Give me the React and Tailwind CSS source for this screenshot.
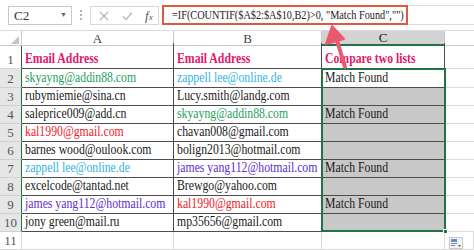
const COLS = 'grid grid-cols-[22px_152px_148px_123px_1fr]'

const C = {
  pink: 'text-[#e5176c]',
  green: 'text-[#26a060]',
  cyan: 'text-[#33b2e4]',
  red: 'text-[#ee2329]',
  purple: 'text-[#5a2fcf]',
  black: 'text-[#1a1a1a]',
}

const rows = [
  [['skyayng@addin88.com', 'green'], ['zappell lee@online.de', 'cyan'], 'Match Found'],
  [['rubymiemie@sina.cn', 'black'], ['Lucy.smith@landg.com', 'black'], ''],
  [['saleprice009@add.cn', 'black'], ['skyayng@addin88.com', 'green'], 'Match Found'],
  [['kal1990@gmail.com', 'red'], ['chavan008@gmail.com', 'black'], ''],
  [['barnes wood@oulook.com', 'black'], ['bolign2013@hotmail.com', 'black'], ''],
  [['zappell lee@online.de', 'cyan'], ['james yang112@hotmail.com', 'purple'], 'Match Found'],
  [['excelcode@tantad.net', 'black'], ['Brewgo@yahoo.com', 'black'], ''],
  [['james yang112@hotmail.com', 'purple'], ['kal1990@gmail.com', 'red'], 'Match Found'],
  [['jony green@mail.ru', 'black'], ['mp35656@gmail.com', 'black'], ''],
]

function Toolbar() {
  return (
    <div className="flex h-[31px] items-start border-b border-[#dcdcdc] bg-white pt-[5px]">
      <div className="ml-[8px] mt-[1px] flex h-[19px] w-[64px] items-center justify-between border border-[#c9c9c9] pl-[5px] pr-[4px]">
        <span className="text-[13px] text-[#333]">C2</span>
        <span className="text-[7px] text-[#666]">▼</span>
      </div>
      <div className="ml-[8px] mt-[5px] flex flex-col gap-[2px]">
        <span className="h-[2px] w-[2px] bg-[#b5b5b5]" />
        <span className="h-[2px] w-[2px] bg-[#b5b5b5]" />
        <span className="h-[2px] w-[2px] bg-[#b5b5b5]" />
      </div>
      <div className="ml-[8px] mt-[1px] flex h-[19px] w-[69px] items-center border border-[#d8d8d8]">
        <svg width="10" height="10" viewBox="0 0 10 10" className="ml-[8px]">
          <path d="M1 1L9 9M9 1L1 9" stroke="#b8b8b8" strokeWidth="1.2" />
        </svg>
        <svg width="11" height="10" viewBox="0 0 11 10" className="ml-[13px]">
          <path d="M1 5.5L4 8.5L10 1.5" stroke="#b8b8b8" strokeWidth="1.2" fill="none" />
        </svg>
        <span className="ml-[12px] text-[13px] italic text-[#555]">
          f<span className="text-[9px]">x</span>
        </span>
      </div>
      <div className="ml-[3px] flex h-[20px] flex-1 items-stretch">
        <div className="flex w-[246px] items-center overflow-hidden border-2 border-[#dc5a3e] pl-[8px]">
          <span className="inline-block origin-left scale-x-[0.79] whitespace-nowrap text-[13px] text-[#222]">
            =IF(COUNTIF($A$2:$A$10,B2)&gt;0, "Match Found","")
          </span>
        </div>
        <div className="flex-1 border-y border-[#dcdcdc]" />
      </div>
    </div>
  )
}

function HeaderRow() {
  return (
    <div className={`${COLS} h-[12px] text-[13px] leading-none text-[#444]`}>
      <div className="relative border-b border-r border-[#c8c8c8] bg-white">
        <svg width="8" height="8" viewBox="0 0 8 8" className="absolute bottom-[1px] right-[2px]">
          <path d="M8 0L8 8L0 8Z" fill="#c4c4c4" />
        </svg>
      </div>
      <div className="flex items-center justify-center border-b border-r border-[#c8c8c8] bg-white">A</div>
      <div className="flex items-center justify-center border-b border-r border-[#c8c8c8] bg-white">B</div>
      <div className="flex items-center justify-center border-b-2 border-r border-b-[#217346] border-r-[#c8c8c8] bg-[#d3d3d3] text-[#222]">
        C
      </div>
      <div className="border-b border-[#c8c8c8] bg-white" />
    </div>
  )
}

function Cell({ children, className = '' }) {
  return (
    <div
      className={`flex items-end overflow-visible whitespace-nowrap border-b border-r border-[#4d4d4d] pb-[2px] pl-[3px] text-[14px] leading-none ${className}`}
    >
      <span className="inline-block origin-left scale-x-[0.84]">{children}</span>
    </div>
  )
}

function RowNum({ n, selected, h }) {
  return (
    <div
      className={`flex items-end justify-center border-b border-r pb-[2px] text-[13px] leading-none text-[#555] ${
        selected ? 'border-b-[#d0d0d0] border-r-[#217346] bg-[#e6e6e6]' : 'border-b-[#d8d8d8] border-r-[#4d4d4d] bg-white'
      } ${h}`}
    >
      {n}
    </div>
  )
}

export default function App() {
  return (
    <div className="relative h-[250px] w-[474px] overflow-hidden bg-white font-['Liberation_Serif','Times_New_Roman',serif]">
      <Toolbar />
      <HeaderRow />

      <div className={`${COLS} h-[26px]`}>
        <RowNum n={1} />
        <Cell className={`font-bold ${C.pink}`}>Email Address</Cell>
        <Cell className={`font-bold ${C.pink}`}>Email Address</Cell>
        <Cell className={`font-bold ${C.pink}`}>Compare two lists</Cell>
        <div className="border-b border-[#dadada]" />
      </div>

      {rows.map((r, i) => {
        const h = i === 0 ? 'h-[19px]' : 'h-[18px]'
        return (
          <div key={i} className={`${COLS} ${h}`}>
            <RowNum n={i + 2} selected />
            <Cell className={C[r[0][1]]}>{r[0][0]}</Cell>
            <Cell className={C[r[1][1]]}>{r[1][0]}</Cell>
            <Cell className={`${i === 0 ? 'bg-white' : 'bg-[#c8c8c8]'} ${C.black}`}>{r[2]}</Cell>
            <div className="border-b border-[#dadada]" />
          </div>
        )
      })}

      {[11, 12].map((n) => (
        <div key={n} className={`${COLS} h-[18px]`}>
          <div className="flex items-end justify-center border-b border-r border-[#d8d8d8] pb-[2px] text-[13px] leading-none text-[#555]">
            {n}
          </div>
          {[0, 1, 2, 3].map((k) => (
            <div key={k} className="border-b border-r border-[#dadada]" />
          ))}
        </div>
      ))}

      {/* selection outline around C2:C10 */}
      <div className="pointer-events-none absolute left-[321px] top-[68px] h-[164px] w-[125px] border-2 border-[#217346]" />
      <div className="absolute left-[443px] top-[229px] h-[5px] w-[5px] border border-white bg-[#217346]" />

      {/* quick analysis button */}
      <svg width="14" height="12" viewBox="0 0 14 12" className="absolute left-[449px] top-[237px]">
        <rect x="0.5" y="0.5" width="13" height="11" fill="#f4f4f4" stroke="#c8c8c8" />
        <rect x="2" y="2" width="6" height="3" fill="#5b8fd0" />
        <rect x="2" y="6" width="6" height="1" fill="#888" />
        <rect x="2" y="8" width="4" height="1" fill="#888" />
        <path d="M9 8L12 8L10.5 10Z" fill="#666" />
      </svg>

      {/* annotation arrow */}
      <svg width="40" height="50" viewBox="0 0 40 50" className="pointer-events-none absolute left-[315px] top-[22px]">
        <path d="M30 45L21 15" stroke="#ea5a6e" strokeWidth="4" strokeLinecap="round" />
        <path d="M17 4L11 22L29 17Z" fill="#ea5a6e" stroke="#ea5a6e" strokeWidth="2" strokeLinejoin="round" />
      </svg>
    </div>
  )
}
